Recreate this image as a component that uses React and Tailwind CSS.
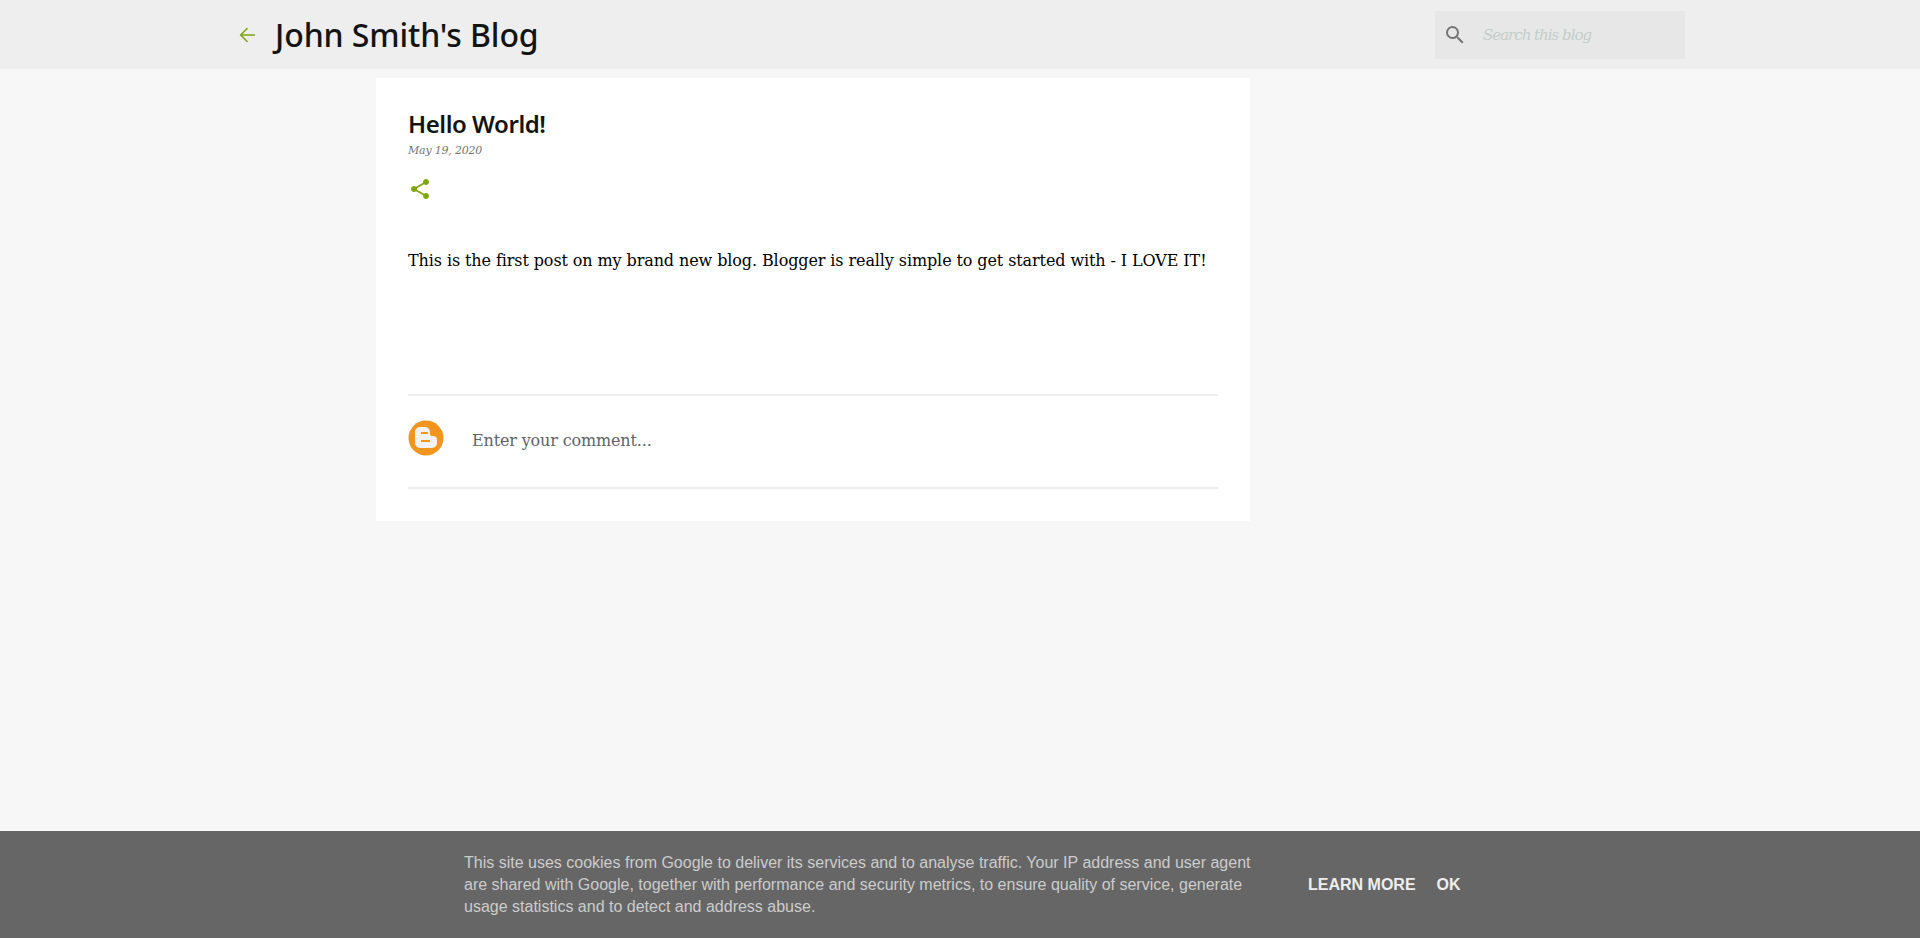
import React from "react";

export default function App() {
  return (
    <div className="h-[938px] overflow-hidden bg-[#f7f7f7] relative font-['Liberation_Sans',sans-serif]">
      <header className="h-[69px] bg-[#eeeeee] flex items-center pl-[235px] pr-[235px]">
        <svg width="24" height="24" viewBox="0 0 24 24" className="fill-[#7fa50f] shrink-0">
          <path d="M20 11.25H7.4l5.6-5.6L12 4.6 4.6 12l7.4 7.4 1-1.05-5.6-5.6H20z" />
        </svg>
        <h1 className="ml-[16px] text-[32px] leading-[40px] font-medium text-[#141414] font-['Noto_Sans',sans-serif] tracking-[-0.1px]">
          John Smith's Blog
        </h1>
        <div className="ml-auto mt-[1px] w-[250px] h-[48px] bg-[#e7e7e7] flex items-center pl-[8px]">
          <svg width="24" height="24" viewBox="0 0 24 24" className="fill-[#757575] shrink-0">
            <path d="M15.5 14h-.79l-.28-.27A6.47 6.47 0 0 0 16 9.5 6.5 6.5 0 1 0 9.5 16c1.61 0 3.09-.59 4.23-1.57l.27.28v.79l5 4.99L20.49 19l-4.99-5zm-6 0C7.01 14 5 11.99 5 9.5S7.01 5 9.5 5 14 7.01 14 9.5 11.99 14 9.5 14z" />
          </svg>
          <span className="ml-[16px] text-[15px] italic text-[#c3cdca] font-['DejaVu_Serif',serif] tracking-[-1px]">
            Search this blog
          </span>
        </div>
      </header>

      <main className="ml-[376px] mt-[9px] w-[874px] h-[443px] bg-white px-[32px] pt-[31px]">
        <h2 className="text-[24px] leading-[30px] font-semibold text-[#141414] font-['Noto_Sans',sans-serif] tracking-[-0.45px]">
          Hello World!
        </h2>
        <p className="mt-[4px] text-[11px] leading-[16px] italic text-[#757575] font-['DejaVu_Serif',serif] tracking-[-0.2px]">
          May 19, 2020
        </p>
        <svg width="24" height="24" viewBox="0 0 24 24" className="fill-[#7fa50f] mt-[18px]">
          <path d="M18 16.08c-.76 0-1.44.3-1.96.77L8.91 12.7c.05-.23.09-.46.09-.7s-.04-.47-.09-.7l7.05-4.11c.54.5 1.25.81 2.04.81 1.66 0 3-1.34 3-3s-1.34-3-3-3-3 1.34-3 3c0 .24.04.47.09.7L8.04 9.81C7.5 9.31 6.79 9 6 9c-1.66 0-3 1.34-3 3s1.34 3 3 3c.79 0 1.5-.31 2.04-.81l7.12 4.16c-.05.21-.08.43-.08.65 0 1.61 1.31 2.92 2.92 2.92s2.92-1.31 2.92-2.92-1.31-2.92-2.92-2.92z" />
        </svg>
        <p className="mt-[48px] text-[16px] leading-[24px] text-[#000000] font-['DejaVu_Serif',serif] tracking-[-0.1px] whitespace-nowrap">
          This is the first post on my brand new blog. Blogger is really simple to get started with - I LOVE IT!
        </p>
        <div className="mt-[121px] border-t-2 border-b-2 border-[#eeeeee] h-[95px] flex items-start">
          <svg width="36" height="36" viewBox="0 0 36 36" className="mt-[24px] shrink-0">
            <circle cx="18" cy="18" r="17.5" fill="#f1951e" />
            <path
              d="M12 7h5a5 5 0 0 1 5 5v2a2 2 0 0 0 2 2h1a4 4 0 0 1 4 4v3a5 5 0 0 1-5 5H12a5 5 0 0 1-5-5V12a5 5 0 0 1 5-5z"
              fill="#f2f2f2"
            />
            <rect x="13" y="12" width="7" height="2" fill="#f1951e" />
            <rect x="13" y="20" width="9" height="2" fill="#f1951e" />
          </svg>
          <span className="ml-[28px] mt-[33px] text-[16px] leading-[24px] text-[#5f6368] font-['DejaVu_Serif',serif] tracking-[-0.15px]">
            Enter your comment...
          </span>
        </div>
      </main>

      <div className="absolute left-0 right-0 bottom-0 h-[107px] bg-[#666666] flex items-center pl-[464px]">
        <p className="w-[800px] text-[16px] leading-[22px] text-[#cccccc]">
          This site uses cookies from Google to deliver its services and to analyse traffic. Your IP address and user agent<br />
          are shared with Google, together with performance and security metrics, to ensure quality of service, generate<br />
          usage statistics and to detect and address abuse.
        </p>
        <div className="ml-[44px] flex gap-[21px] text-[16px] leading-[22px] font-bold text-[#eeeeee]">
          <span>LEARN MORE</span>
          <span>OK</span>
        </div>
      </div>
    </div>
  );
}
